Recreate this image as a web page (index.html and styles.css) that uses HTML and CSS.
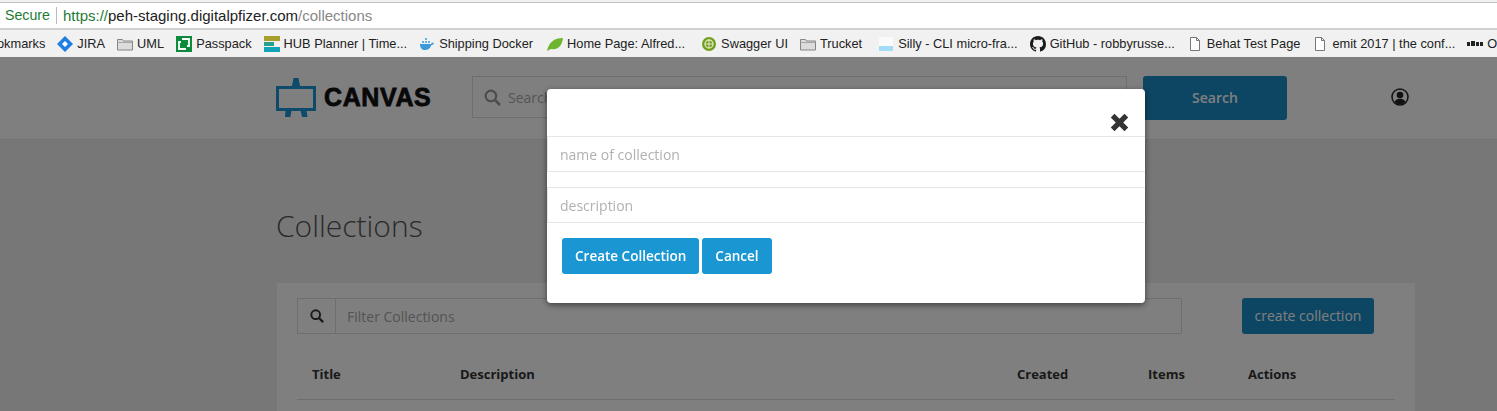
FILE: index.html
```html
<!DOCTYPE html>
<html lang="en">
<head>
    <meta charset="UTF-8">
    <meta name="viewport" content="width=device-width, initial-scale=1.0">
    <title>Collections</title>
    <link rel="stylesheet" href="styles.css">
</head>
<body>
    <div class="browser-bar">
        <div class="address-bar">
            <span class="secure">Secure</span>
            <span class="url"><span class="scheme">https://</span><span class="domain">peh-staging.digitalpfizer.com</span><span class="path">/collections</span></span>
        </div>
        <div class="bookmarks">
            <span class="bookmark first">okmarks</span>
            <span class="bookmark">
                <svg class="bm-icon" viewBox="0 0 16 16"><path d="M8 0l8 8-8 8-8-8z" fill="#1f7fe0"/><path d="M8 5l3 3-3 3-3-3z" fill="#fff"/></svg>
                JIRA
            </span>
            <span class="bookmark">
                <svg class="bm-icon" viewBox="0 0 16 16"><path d="M.5 3.500h5l1 1.500h9v9H.5z" fill="#dcdcdc" stroke="#858585"/><path d="M.5 6.500h15" stroke="#a5a5a5"/></svg>
                UML
            </span>
            <span class="bookmark">
                <svg class="bm-icon" viewBox="0 0 16 16"><path d="M0 0h16v16H0z" fill="#0b8c3a"/><path d="M6 3h7v7h-2M10 13H3V6h2" fill="none" stroke="#fff" stroke-width="1.800"/></svg>
                Passpack
            </span>
            <span class="bookmark">
                <svg class="bm-icon" viewBox="0 0 16 16"><path d="M0 0h16v5H0z" fill="#a8a02c"/><path d="M0 6h10v4H0z" fill="#26a08c"/><path d="M0 11h16v5H0z" fill="#16a2b5"/></svg>
                HUB Planner | Time...
            </span>
            <span class="bookmark">
                <svg class="bm-icon" viewBox="0 0 16 16"><path d="M1 8h11c.5-1 1.500-1.500 3-1-.5 1.500-1.500 2-2.500 2-1 3-3.500 5-6.500 5C3 14 1 12 1 8z" fill="#3d9ad8"/><path d="M3 5h2v2H3zM6 5h2v2H6zM9 5h2v2H9zM6 2h2v2H6z" fill="#5fb0e6"/></svg>
                Shipping Docker
            </span>
            <span class="bookmark nudge-sm">
                <svg class="bm-icon" viewBox="0 0 16 16"><path d="M0 15C2 6 7 2 16 2c-1 8-5 12-12 11z" fill="#6eb52f"/></svg>
                Home Page: Alfred...
            </span>
            <span class="bookmark nudge-lg">
                <svg class="bm-icon" viewBox="0 0 16 16"><circle cx="8" cy="8" r="7" fill="#6f9f1e"/><circle cx="8" cy="8" r="4" fill="none" stroke="#dfe8c0" stroke-width="1.300"/><path d="M8 4v8M4 8h8" stroke="#dfe8c0"/></svg>
                Swagger UI
            </span>
            <span class="bookmark">
                <svg class="bm-icon" viewBox="0 0 16 16"><path d="M.5 3.500h5l1 1.500h9v9H.5z" fill="#dcdcdc" stroke="#858585"/><path d="M.5 6.500h15" stroke="#a5a5a5"/></svg>
                Trucket
            </span>
            <span class="bookmark nudge-lg">
                <svg class="bm-icon" viewBox="0 0 16 16"><path d="M1 1h14v9H1z" fill="#fafafa"/><path d="M1 10h14v5H1z" fill="#a3dcf7"/></svg>
                Silly - CLI micro-fra...
            </span>
            <span class="bookmark">
                <svg class="bm-icon" viewBox="0 0 16 16"><path fill="#1b1b1b" d="M8 0C3.580 0 0 3.580 0 8c0 3.540 2.290 6.530 5.470 7.590.4.070.55-.17.55-.38 0-.19-.01-.82-.01-1.490-2.010.37-2.530-.49-2.690-.94-.09-.23-.48-.94-.82-1.130-.28-.15-.68-.52-.01-.53.630-.01 1.080.58 1.230.82.720 1.210 1.870.87 2.330.66.070-.52.280-.87.510-1.070-1.780-.2-3.640-.89-3.640-3.950 0-.87.310-1.590.82-2.150-.08-.2-.36-1.020.08-2.120 0 0 .67-.21 2.200.82.640-.18 1.320-.27 2-.27s1.360.09 2 .27c1.530-1.040 2.200-.82 2.200-.82.440 1.100.16 1.920.08 2.120.51.560.82 1.270.82 2.150 0 3.070-1.870 3.750-3.650 3.950.29.250.54.730.54 1.480 0 1.070-.01 1.930-.01 2.200 0 .21.150.46.550.38A8.010 8.010 0 0016 8c0-4.420-3.580-8-8-8z"/></svg>
                GitHub - robbyrusse...
            </span>
            <span class="bookmark">
                <svg class="bm-icon" viewBox="0 0 16 16"><path d="M3.500 1.500h6l3 3v10h-9z" fill="#fff" stroke="#777"/><path d="M9.500 1.500v3h3" fill="none" stroke="#777"/></svg>
                Behat Test Page
            </span>
            <span class="bookmark">
                <svg class="bm-icon" viewBox="0 0 16 16"><path d="M3.500 1.500h6l3 3v10h-9z" fill="#fff" stroke="#777"/><path d="M9.500 1.500v3h3" fill="none" stroke="#777"/></svg>
                emit 2017 | the conf...
            </span>
            <span class="bookmark">
                <svg class="bm-icon" viewBox="0 0 16 16"><path d="M0 6h3v4H0zM4 5h4v5H4zM9 6h3v4H9zM13 6h3v4h-3z" fill="#222"/></svg>
                Or
            </span>
        </div>
    </div>

    <div class="page">
        <header class="site-header">
            <div class="logo">
                <svg class="logo-mark" viewBox="0 0 40 39"><path d="M16 8l1.500-8h5l1.500 8z" fill="#1c96d4"/><rect x="1.500" y="9.500" width="37" height="22" fill="none" stroke="#1c96d4" stroke-width="3"/><path d="M9.500 32h6l-1 7H9zM24.500 32h6l1 7H26z" fill="#1c96d4"/></svg>
                <span class="logo-text">CANVAS</span>
            </div>
            <div class="site-search">
                <svg class="search-icon" viewBox="0 0 16 16"><circle cx="6.500" cy="6.500" r="5" fill="none" stroke="#999" stroke-width="2"/><path d="M10.500 10.500l4.500 4.500" stroke="#999" stroke-width="2.500"/></svg>
                <span class="search-hint">Search</span>
            </div>
            <div class="btn-search">Search</div>
            <svg class="user-icon" viewBox="0 0 18 18"><circle cx="9" cy="9" r="8" fill="#fff" stroke="#222" stroke-width="1.500"/><circle cx="9" cy="7" r="3.300" fill="#222"/><path d="M3.500 14c1-2.500 3-3.200 5.500-3.200s4.500.7 5.500 3.200c-1.500 1.600-3.400 2.300-5.500 2.300s-4-.7-5.500-2.300z" fill="#222"/></svg>
        </header>

        <main class="content">
            <h1>Collections</h1>
            <section class="card">
                <div class="toolbar">
                    <div class="filter">
                        <span class="filter-addon">
                            <svg class="filter-icon" viewBox="0 0 16 16"><circle cx="6.500" cy="6.500" r="5" fill="none" stroke="#333" stroke-width="2.200"/><path d="M10.500 10.500l4.500 4.500" stroke="#333" stroke-width="2.600"/></svg>
                        </span>
                        <span class="filter-hint">Filter Collections</span>
                    </div>
                    <div class="btn-create">create collection</div>
                </div>
                <table class="collections">
                    <thead>
                        <tr>
                            <th class="col-title">Title</th>
                            <th class="col-desc">Description</th>
                            <th class="col-created">Created</th>
                            <th class="col-items">Items</th>
                            <th>Actions</th>
                        </tr>
                    </thead>
                </table>
            </section>
        </main>
    </div>

    <div class="backdrop"></div>

    <div class="modal">
        <div class="modal-top">
            <svg class="close-icon" viewBox="0 0 18 18"><path d="M2.500 2.500l13 13M15.500 2.500l-13 13" stroke="#333" stroke-width="5"/></svg>
        </div>
        <div class="modal-field">name of collection</div>
        <div class="modal-field second">description</div>
        <div class="modal-actions">
            <div class="btn-modal">Create Collection</div>
            <div class="btn-modal">Cancel</div>
        </div>
    </div>
</body>
</html>
```

FILE: styles.css
```css
html, body {
    margin: 0;
    height: 411px;
    overflow: hidden;
}

body {
    font-family: "Open Sans", sans-serif;
    background-color: #eeeeee;
    color: #333;
}

/* browser chrome */
.browser-bar {
    height: 57px;
    box-sizing: border-box;
    padding-top: 2px;
    background-color: #f1f1f1;
}

.address-bar {
    height: 25px;
    border-top: 1px solid #c4c4c4;
    border-bottom: 2px solid #d0d0d0;
    background-color: #fff;
    padding-left: 5px;
    display: flex;
    align-items: center;
    font-family: "Liberation Sans", sans-serif;
    font-size: 15px;
}

.secure {
    font-size: 14.200px;
    color: #1e7b34;
    padding-right: 6px;
    border-right: 1px solid #bbb;
    margin-right: 6px;
    line-height: 17px;
}

.scheme {
    color: #1e7b34;
}

.domain {
    color: #222;
}

.path {
    color: #888;
}

.bookmarks {
    height: 27px;
    display: flex;
    align-items: center;
    gap: 12px;
    white-space: nowrap;
    overflow: hidden;
    font-family: "Liberation Sans", sans-serif;
    font-size: 12.800px;
    color: #222;
}

.bookmark {
    display: flex;
    align-items: center;
    gap: 4px;
}

.bookmark.first {
    margin-left: -3px;
}

.bookmark.nudge-sm {
    margin-left: 2px;
}

.bookmark.nudge-lg {
    margin-left: 4px;
}

.bm-icon {
    width: 16px;
    height: 16px;
    flex-shrink: 0;
}

/* page behind the dialog */
.page {
    height: 354px;
}

.site-header {
    height: 63px;
    background-color: #fff;
    border-bottom: 1px solid #e6e6e6;
    display: flex;
    align-items: flex-start;
    padding-left: 276px;
    padding-top: 19px;
}

.logo {
    width: 196px;
    height: 42px;
    display: flex;
    align-items: center;
    gap: 8px;
}

.logo-mark {
    width: 40px;
    height: 39px;
}

.logo-text {
    font-family: "Liberation Sans", sans-serif;
    font-weight: bold;
    font-size: 25px;
    letter-spacing: .6px;
    color: #111;
    -webkit-text-stroke: .8px #111;
}

.site-search {
    width: 655px;
    height: 42px;
    box-sizing: border-box;
    border: 1px solid #ddd;
    display: flex;
    align-items: center;
    padding-left: 11px;
}

.search-icon {
    width: 17px;
    height: 17px;
    margin-right: 7px;
}

.search-hint {
    color: #aaa;
    font-size: 14px;
}

.btn-search {
    width: 144px;
    height: 44px;
    margin-left: 16px;
    line-height: 44px;
    text-align: center;
    border-radius: 3px;
    background-color: #1a8cc6;
    color: #fff;
    font-size: 14px;
    font-weight: 600;
}

.user-icon {
    width: 18px;
    height: 18px;
    margin-top: 12px;
    margin-left: 104px;
}

.content {
    padding-left: 276px;
    padding-right: 82px;
}

h1 {
    margin: 0;
    padding-top: 65px;
    font-size: 30px;
    font-weight: 300;
    line-height: 41px;
    color: #555;
}

.card {
    margin-top: 37px;
    margin-left: 1px;
    background-color: #fff;
    padding: 15px 20px 0 20px;
    height: 128px;
    box-sizing: border-box;
}

.toolbar {
    display: flex;
    justify-content: space-between;
    padding-right: 21px;
}

.filter {
    width: 885px;
    height: 36px;
    box-sizing: border-box;
    border: 1px solid #ddd;
    display: flex;
    align-items: center;
}

.filter-addon {
    width: 37px;
    height: 100%;
    border-right: 1px solid #ddd;
    display: flex;
    align-items: center;
    justify-content: center;
}

.filter-icon {
    width: 14px;
    height: 14px;
}

.filter-hint {
    padding-left: 11px;
    font-size: 14px;
    color: #a8a8a8;
}

.btn-create {
    width: 132px;
    height: 36px;
    line-height: 35px;
    text-align: center;
    border-radius: 3px;
    background-color: #1a8cc6;
    color: #fff;
    font-size: 14px;
}

.collections {
    width: 100%;
    margin-top: 22px;
    border-collapse: collapse;
    table-layout: fixed;
}

.collections th {
    height: 35px;
    padding: 0 0 8px 15px;
    text-align: left;
    font-size: 13px;
    font-weight: 700;
    border-bottom: 1px solid #ddd;
}

.col-title {
    width: 133px;
}

.col-desc {
    width: 542px;
}

.col-created {
    width: 116px;
}

.col-items {
    width: 85px;
}

/* dialog */
.backdrop {
    position: fixed;
    inset: 57px 0 0 0;
    background-color: rgba(0, 0, 0, .5);
}

.modal {
    position: fixed;
    left: 547px;
    top: 89px;
    width: 598px;
    height: 214px;
    background-color: #fff;
    border-radius: 4px;
    box-shadow: 0 2px 6px rgba(0, 0, 0, .5);
}

.modal-top {
    height: 47px;
    display: flex;
    justify-content: flex-end;
    align-items: flex-end;
    padding-right: 16px;
    box-sizing: border-box;
    padding-bottom: 4px;
}

.close-icon {
    width: 19px;
    height: 19px;
}

.modal-field {
    height: 36px;
    box-sizing: border-box;
    border: 1px solid #e6e6e6;
    border-right: 0;
    padding-left: 12px;
    line-height: 35px;
    font-size: 14px;
    color: #b0b0b0;
}

.modal-field.second {
    margin-top: 15px;
}

.modal-actions {
    display: flex;
    gap: 3px;
    padding: 15px 0 0 15px;
}

.btn-modal {
    height: 36px;
    line-height: 36px;
    padding: 0 13px;
    border-radius: 3px;
    background-color: #1a96d2;
    color: #fff;
    font-size: 13.500px;
    font-weight: 600;
}
```
